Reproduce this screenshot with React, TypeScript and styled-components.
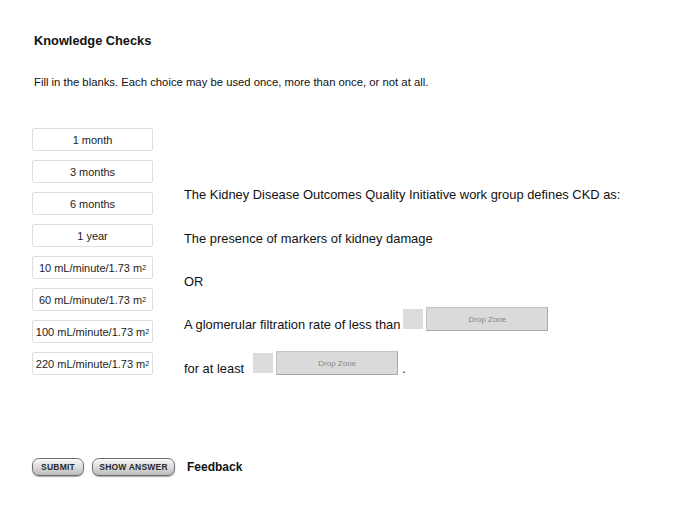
import React from "react";
import styled, { createGlobalStyle } from "styled-components";

const Global = createGlobalStyle`
  html, body { margin: 0; padding: 0; background: #ffffff; }
  body { font-family: "Liberation Sans", Arial, sans-serif; color: #111; }
`;

const Page = styled.div`
  width: 700px;
  height: 525px;
  box-sizing: border-box;
  padding: 33px 0 0 32px;
  display: flex;
  flex-direction: column;
`;

const Title = styled.h1`
  margin: 0 0 0 2px;
  font-size: 12.8px;
  line-height: 16px;
  font-weight: bold;
  color: #111;
`;

const Instruction = styled.p`
  margin: 26px 0 0 2px;
  font-size: 11.3px;
  line-height: 14px;
  color: #111;
`;

const Main = styled.div`
  margin-top: 39px;
  display: flex;
  align-items: flex-start;
`;

const Choices = styled.div`
  display: flex;
  flex-direction: column;
  gap: 9px;
  width: 121px;
`;

const Choice = styled.div`
  box-sizing: border-box;
  height: 23px;
  border: 1px solid #dedede;
  border-radius: 2px;
  background: #fff;
  display: flex;
  align-items: center;
  justify-content: center;
  font-size: 11px;
  color: #222;
`;

const Sup = styled.sup`
  font-size: 7px;
  vertical-align: 4px;
  line-height: 0;
`;

const Statement = styled.div`
  margin-left: 31px;
  display: flex;
  flex-direction: column;
`;

const Line = styled.div<{ $mt: number }>`
  margin-top: ${(p) => p.$mt}px;
  height: 24px;
  display: flex;
  align-items: center;
  font-size: 12.9px;
  color: #111;
  white-space: nowrap;
`;

const Text = styled.span<{ $drop?: number }>`
  padding-top: ${(p) => p.$drop ?? 0}px;
`;

const Blank = styled.span<{ $ml: number }>`
  margin-left: ${(p) => p.$ml}px;
  width: 20px;
  height: 20px;
  background: #dcdcdc;
`;

const DropZone = styled.span`
  margin-left: 3px;
  box-sizing: border-box;
  width: 122px;
  height: 24px;
  background: #dadada;
  border: 1px solid #c4c4c4;
  border-right-color: #a8a8a8;
  border-bottom-color: #a8a8a8;
  display: flex;
  align-items: center;
  justify-content: center;
  font-size: 8px;
  color: #858585;
`;

const Period = styled.span`
  margin-left: 4px;
  padding-top: 10px;
`;

const Footer = styled.div`
  margin-top: 83px;
  display: flex;
  align-items: center;
  gap: 8px;
`;

const Button = styled.button<{ $w: number }>`
  box-sizing: border-box;
  width: ${(p) => p.$w}px;
  height: 18px;
  padding: 0;
  border: 1px solid #6d6d6d;
  border-radius: 7px;
  background: linear-gradient(to bottom, #f7f7f7 0%, #dcdcdc 50%, #bcbcbc 100%);
  box-shadow: 0 1px 1px rgba(0, 0, 0, 0.35), inset 0 1px 0 #fff;
  font-family: "Liberation Sans", Arial, sans-serif;
  font-size: 8.5px;
  font-weight: bold;
  letter-spacing: 0.2px;
  color: #2a2a2a;
  text-transform: uppercase;
`;

const Feedback = styled.span`
  margin-left: 4px;
  font-size: 12px;
  font-weight: bold;
  color: #111;
`;

const choices: React.ReactNode[] = [
  "1 month",
  "3 months",
  "6 months",
  "1 year",
  <>10 mL/minute/1.73 m<Sup>2</Sup></>,
  <>60 mL/minute/1.73 m<Sup>2</Sup></>,
  <>100 mL/minute/1.73 m<Sup>2</Sup></>,
  <>220 mL/minute/1.73 m<Sup>2</Sup></>,
];

export default function App() {
  return (
    <>
      <Global />
      <Page>
        <Title>Knowledge Checks</Title>
        <Instruction>
          Fill in the blanks. Each choice may be used once, more than once, or not at all.
        </Instruction>
        <Main>
          <Choices>
            {choices.map((c, i) => (
              <Choice key={i}>{c}</Choice>
            ))}
          </Choices>
          <Statement>
            <Line $mt={54}>
              <Text>The Kidney Disease Outcomes Quality Initiative work group defines CKD as:</Text>
            </Line>
            <Line $mt={20}>
              <Text>The presence of markers of kidney damage</Text>
            </Line>
            <Line $mt={19}>
              <Text>OR</Text>
            </Line>
            <Line $mt={14}>
              <Text $drop={10}>A glomerular filtration rate of less than</Text>
              <Blank $ml={3} />
              <DropZone>Drop Zone</DropZone>
            </Line>
            <Line $mt={20}>
              <Text $drop={10}>for at least</Text>
              <Blank $ml={9} />
              <DropZone>Drop Zone</DropZone>
              <Period>.</Period>
            </Line>
          </Statement>
        </Main>
        <Footer>
          <Button $w={52}>Submit</Button>
          <Button $w={83}>Show Answer</Button>
          <Feedback>Feedback</Feedback>
        </Footer>
      </Page>
    </>
  );
}
